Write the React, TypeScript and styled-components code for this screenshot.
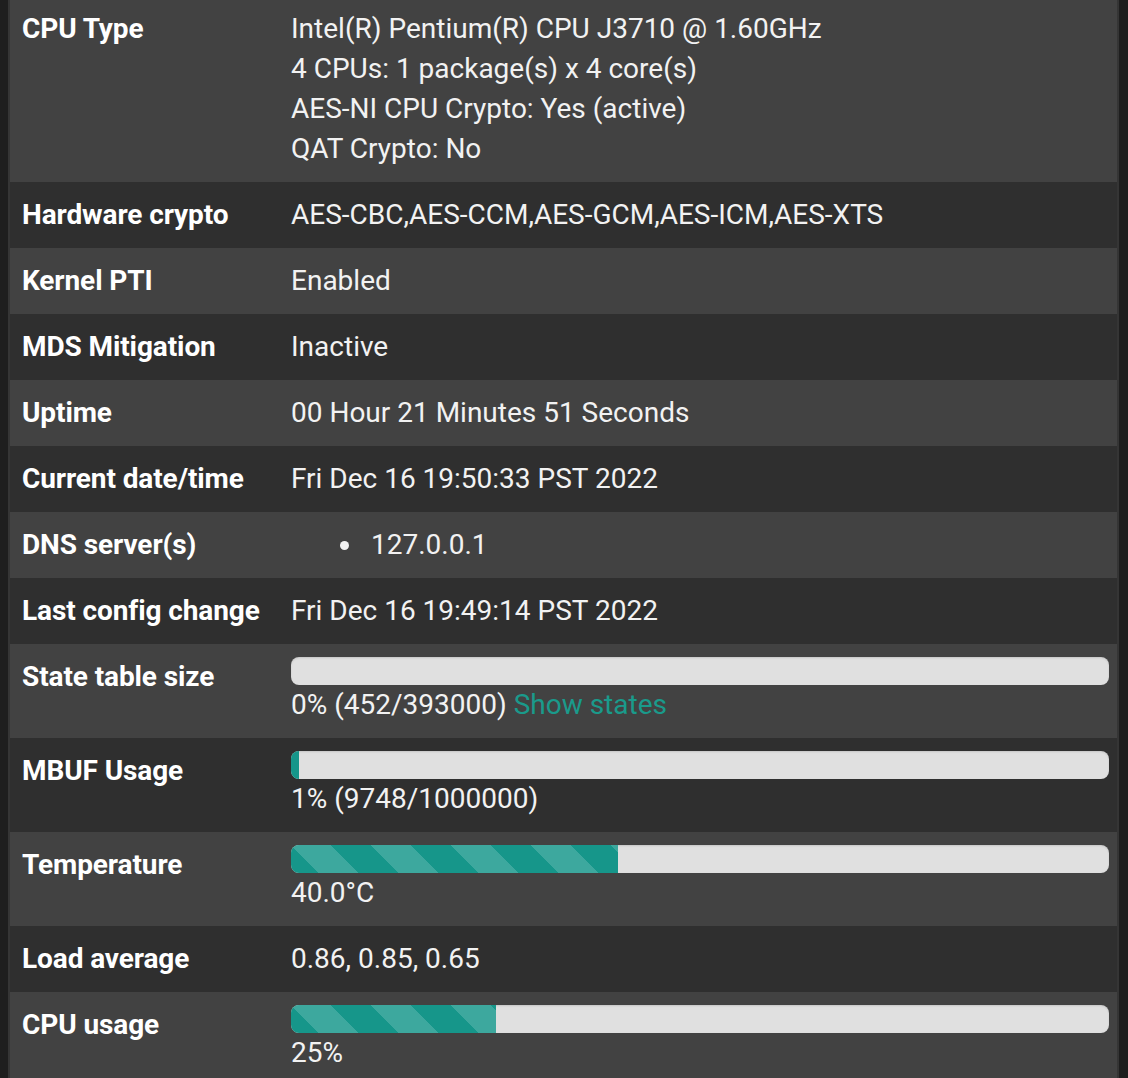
import React from 'react';
import styled, { createGlobalStyle } from 'styled-components';

const GlobalStyle = createGlobalStyle`
  html, body {
    margin: 0;
    padding: 0;
    background: #1e1e1e;
    overflow: hidden;
  }
  body {
    font-family: Roboto, "Liberation Sans", sans-serif;
    font-size: 28px;
    line-height: 40px;
    color: #f2f2f2;
  }
`;

const Panel = styled.div`
  margin: -4px 9px 0 8px;
  border-left: 2px solid #353535;
  border-right: 2px solid #353535;
  background: #2f2f2f;
`;

const Row = styled.div<{ $odd: boolean }>`
  display: grid;
  grid-template-columns: 281px 1fr;
  background: ${p => (p.$odd ? '#424242' : '#2f2f2f')};
  padding: 13px 8px 13px 0;
`;

const Label = styled.div`
  padding-left: 12px;
  font-weight: 700;
  color: #ffffff;
  letter-spacing: -0.1px;
`;

const Value = styled.div`
  color: #f2f2f2;
`;

const List = styled.ul`
  margin: 0;
  padding-left: 80px;
  list-style: none;
  li {
    position: relative;
  }
  li::before {
    content: '';
    position: absolute;
    left: -31px;
    top: 16px;
    width: 9px;
    height: 9px;
    border-radius: 50%;
    background: #f2f2f2;
  }
`;

const Bar = styled.div`
  height: 28px;
  border-radius: 8px;
  background: #e0e0e0;
  overflow: hidden;
  box-shadow: inset 0 1px 2px rgba(0, 0, 0, 0.12);
`;

const Fill = styled.div<{ $striped?: boolean }>`
  height: 100%;
  background-color: #16968a;
  background-image: ${p =>
    p.$striped
      ? 'linear-gradient(45deg, rgba(255,255,255,.17) 25%, transparent 25%, transparent 50%, rgba(255,255,255,.17) 50%, rgba(255,255,255,.17) 75%, transparent 75%, transparent)'
      : 'none'};
  background-size: 80px 80px;
`;

const Link = styled.a`
  color: #1a9a8b;
  text-decoration: none;
`;

interface IProgress {
  pct: number;
  striped?: boolean;
}

const Progress: React.FC<IProgress> = ({ pct, striped }) => (
  <Bar>
    <Fill $striped={striped} style={{ width: `${pct}%` }} />
  </Bar>
);

const rows: { label: string; value: React.ReactNode }[] = [
  {
    label: 'CPU Type',
    value: (
      <>
        Intel(R) Pentium(R) CPU J3710 @ 1.60GHz
        <br />4 CPUs: 1 package(s) x 4 core(s)
        <br />
        AES-NI CPU Crypto: Yes (active)
        <br />
        QAT Crypto: No
      </>
    )
  },
  { label: 'Hardware crypto', value: 'AES-CBC,AES-CCM,AES-GCM,AES-ICM,AES-XTS' },
  { label: 'Kernel PTI', value: 'Enabled' },
  { label: 'MDS Mitigation', value: 'Inactive' },
  { label: 'Uptime', value: '00 Hour 21 Minutes 51 Seconds' },
  { label: 'Current date/time', value: 'Fri Dec 16 19:50:33 PST 2022' },
  {
    label: 'DNS server(s)',
    value: (
      <List>
        <li>127.0.0.1</li>
      </List>
    )
  },
  { label: 'Last config change', value: 'Fri Dec 16 19:49:14 PST 2022' },
  {
    label: 'State table size',
    value: (
      <>
        <Progress pct={0} />
        0% (452/393000) <Link href="#">Show states</Link>
      </>
    )
  },
  {
    label: 'MBUF Usage',
    value: (
      <>
        <Progress pct={1} />
        1% (9748/1000000)
      </>
    )
  },
  {
    label: 'Temperature',
    value: (
      <>
        <Progress pct={40} striped />
        40.0°C
      </>
    )
  },
  { label: 'Load average', value: '0.86, 0.85, 0.65' },
  {
    label: 'CPU usage',
    value: (
      <>
        <Progress pct={25} striped />
        25%
      </>
    )
  }
];

const App: React.FC = () => (
  <>
    <GlobalStyle />
    <Panel>
      {rows.map((r, i) => (
        <Row key={r.label} $odd={i % 2 === 0}>
          <Label>{r.label}</Label>
          <Value>{r.value}</Value>
        </Row>
      ))}
    </Panel>
  </>
);

export default App;
